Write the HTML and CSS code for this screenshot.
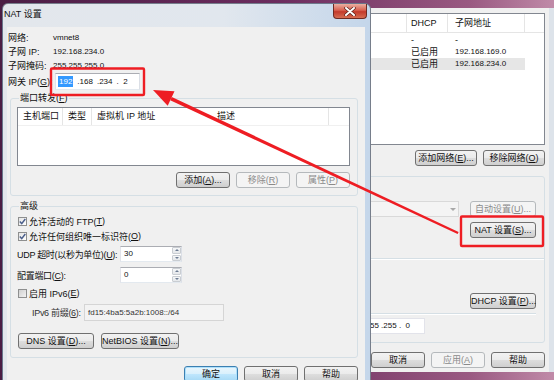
FILE: index.html
```html
<!DOCTYPE html>
<html lang="zh-CN">
<head>
    <meta charset="UTF-8">
    <meta name="viewport" content="width=device-width, initial-scale=1.0">
    <title>NAT 设置</title>
    <link rel="stylesheet" href="styles.css">
</head>
<body>

<div class="desktop">

    <!-- Virtual network editor, behind the dialog -->
    <div class="editor">
        <div class="netlist">
            <div class="netgrid nethead">
                <div class="nc rest"></div>
                <div class="nc dhcp">DHCP</div>
                <div class="nc subnet">子网地址</div>
                <div class="nc fill"></div>
            </div>
            <div class="netrows">
                <div class="netgrid netrow">
                    <div class="nc rest"></div>
                    <div class="nc dhcp">-</div>
                    <div class="nc subnet">-</div>
                    <div class="nc fill"></div>
                </div>
                <div class="netgrid netrow">
                    <div class="nc rest"></div>
                    <div class="nc dhcp">已启用</div>
                    <div class="nc subnet num">192.168.169.0</div>
                    <div class="nc fill"></div>
                </div>
                <div class="netgrid netrow selected">
                    <div class="nc rest"></div>
                    <div class="nc dhcp">已启用</div>
                    <div class="nc subnet num">192.168.234.0</div>
                    <div class="nc fill"></div>
                </div>
            </div>
        </div>

        <div class="btnrow top-gap">
            <button class="btn w62">添加网络(<u>E</u>)...</button>
            <button class="btn w62">移除网络(<u>O</u>)</button>
        </div>

        <div class="vmgroup">
            <div class="combo-row">
                <div class="combo"><span class="combo-arrow"></span></div>
                <button class="btn w66" disabled>自动设置(<u>U</u>)...</button>
            </div>
            <button class="btn w66 nat-btn">NAT 设置(<u>S</u>)...</button>
            <div class="hsep wide"></div>
            <button class="btn w66 dhcp-btn">DHCP 设置(<u>P</u>)...</button>
            <div class="hsep short"></div>
            <div class="maskbox num">255 .255 .255 .&nbsp; 0</div>
        </div>

        <div class="btnrow bottom-gap">
            <button class="btn">取消</button>
            <button class="btn" disabled>应用(<u>A</u>)</button>
            <button class="btn">帮助</button>
        </div>
    </div>

    <!-- NAT settings dialog -->
    <div class="dialog">
        <div class="titlebar">
            <span class="title">NAT 设置</span>
            <span class="close">
                <svg width="12" height="9" viewBox="0 0 12 9">
                    <path d="M2 1 L10 8 M10 1 L2 8" stroke="#5a2018" stroke-width="3.4" stroke-linecap="round"/>
                    <path d="M2 1 L10 8 M10 1 L2 8" stroke="#ffffff" stroke-width="2" stroke-linecap="round"/>
                </svg>
            </span>
        </div>

        <div class="client">
            <div class="info"><span class="lbl">网络:</span><span class="num">vmnet8</span></div>
            <div class="info"><span class="lbl">子网 IP:</span><span class="num">192.168.234.0</span></div>
            <div class="info"><span class="lbl">子网掩码:</span><span class="num">255.255.255.0</span></div>
            <div class="info gateway">
                <span class="lbl">网关 IP(<u>G</u>):</span>
                <div class="ipctl num"><span class="sel">192</span><span class="oct">.168</span><span class="oct">.234</span><span class="oct">.&nbsp; 2</span></div>
            </div>

            <fieldset class="group ports">
                <legend>端口转发(<u>F</u>)</legend>
                <div class="portlist">
                    <div class="porthead">
                        <div class="ph c1">主机端口</div>
                        <div class="ph c2">类型</div>
                        <div class="ph c3">虚拟机 IP 地址</div>
                        <div class="ph c4">描述</div>
                    </div>
                </div>
                <div class="btnrow port-btns">
                    <button class="btn">添加(<u>A</u>)...</button>
                    <button class="btn" disabled>移除(<u>R</u>)</button>
                    <button class="btn" disabled>属性(<u>P</u>)</button>
                </div>
            </fieldset>

            <fieldset class="group advanced">
                <legend>高级</legend>
                <label class="chk first">
                    <span class="box">
                        <svg width="7" height="7" viewBox="0 0 7 7"><path d="M0.8 3.6 L2.7 5.6 L6.3 1" fill="none" stroke="#4b5f8c" stroke-width="1.5"/></svg>
                    </span>
                    允许活动的 FTP(<u>T</u>)
                </label>
                <label class="chk">
                    <span class="box">
                        <svg width="7" height="7" viewBox="0 0 7 7"><path d="M0.8 3.6 L2.7 5.6 L6.3 1" fill="none" stroke="#4b5f8c" stroke-width="1.5"/></svg>
                    </span>
                    允许任何组织唯一标识符(<u>O</u>)
                </label>

                <div class="field udp">
                    <span class="flbl">UDP 超时(以秒为单位)(<u>U</u>):</span>
                    <div class="spin">
                        <span class="spin-val num">30</span>
                        <span class="spin-btns"><span class="sb up"></span><span class="sb down"></span></span>
                    </div>
                </div>
                <div class="field cfg">
                    <span class="flbl">配置端口(<u>C</u>):</span>
                    <div class="spin">
                        <span class="spin-val num">0</span>
                        <span class="spin-btns"><span class="sb up"></span><span class="sb down"></span></span>
                    </div>
                </div>

                <label class="chk ipv6">
                    <span class="box off"></span>
                    启用 IPv6(<u>E</u>)
                </label>

                <div class="field prefix">
                    <span class="plbl">IPv6 前缀(<u>6</u>):</span>
                    <div class="prefix-box num">fd15:4ba5:5a2b:1008::/64</div>
                </div>

                <div class="btnrow left dns-row">
                    <button class="btn w76">DNS 设置(<u>D</u>)...</button>
                    <button class="btn w78">NetBIOS 设置(<u>N</u>)...</button>
                </div>
            </fieldset>

            <div class="btnrow dlg-btns">
                <button class="btn default">确定</button>
                <button class="btn">取消</button>
                <button class="btn">帮助</button>
            </div>
        </div>
    </div>

    <!-- red annotation marks -->
    <svg class="marks" width="554" height="380" viewBox="0 0 554 380">
        <rect x="51" y="68.5" width="93" height="26.5" rx="1" fill="none" stroke="#ee1d23" stroke-width="2.4"/>
        <rect x="461" y="216.5" width="82" height="29.5" rx="1" fill="none" stroke="#ee1d23" stroke-width="2.4"/>
        <polygon points="458.6,232.1 457.6,234.1 170.2,100.3 171.8,96.9" fill="#ee1d23"/>
        <polygon points="153,90 174.5,91.3 167.7,105.7" fill="#ee1d23"/>
    </svg>

</div>

</body>
</html>
```

FILE: styles.css
```css
* {
    box-sizing: border-box;
}
body {
    margin: 0;
    width: 554px;
    height: 380px;
    overflow: hidden;
    font-family: "Liberation Sans", "Noto Sans CJK SC", sans-serif;
    font-size: 9px;
    color: #111;
    background: linear-gradient(90deg, #4a1d44 0%, #6b2c5e 50%, #9a5a82 85%, #c08aa8 100%);
}
.desktop {
    position: relative;
    width: 554px;
    height: 380px;
}
.num {
    font-size: 8px;
}
u {
    text-decoration: underline;
}

/* buttons */
.btn {
    font: inherit;
    color: #111;
    width: 54px;
    height: 16px;
    padding: 0;
    line-height: 14px;
    border: 1px solid #707070;
    border-radius: 3px;
    background: linear-gradient(#f2f2f2 0%, #ebebeb 48%, #dddddd 52%, #cfcfcf 100%);
    white-space: nowrap;
}
.btn:disabled {
    color: #8a8a8a;
    border-color: #b5b9bc;
    background: #f4f4f4;
}
.btn.default {
    border-color: #3c7fb1;
    background: linear-gradient(#eaf6fd 0%, #d9f0fc 48%, #bee6fd 52%, #a7d9f5 100%);
    box-shadow: inset 0 0 0 1px #aee0fb;
}
.w62 { width: 62px; }
.w66 { width: 66px; }
.w76 { width: 76px; }
.w78 { width: 78px; }
.btnrow {
    display: flex;
    justify-content: flex-end;
    gap: 6px;
}
.btnrow.left {
    justify-content: flex-start;
    gap: 7px;
}

/* ---------- background window ---------- */
.editor {
    position: absolute;
    left: 250px;
    top: 8px;
    width: 304px;
    height: 364px;
    background: #f0f0f0;
    border-right: 5px solid #dde3ea;
    padding: 5px 4px 0 10px;
    display: flex;
    flex-direction: column;
}
.netlist {
    height: 132px;
    border: 1px solid #828790;
    background: #fff;
}
.netgrid {
    display: grid;
    grid-template-columns: 1fr 41px 77px 19px;
}
.nethead {
    height: 19px;
    border-bottom: 1px solid #e5e5e5;
    line-height: 18px;
}
.nethead .nc {
    border-right: 1px solid #e5e5e5;
}
.nethead .fill {
    border-right: none;
}
.netrows {
    padding-top: 1px;
}
.netrow {
    height: 12px;
    line-height: 12px;
}
.nc.dhcp {
    padding-left: 4px;
}
.nc.subnet {
    padding-left: 7px;
}
.netrow.selected .nc {
    background: #e6e6e6;
}
.netrow.selected .fill {
    background: none;
}
.top-gap {
    margin-top: 5px;
}
.vmgroup {
    margin-top: 10px;
    height: 167px;
    border: 1px solid #d5dfe5;
    border-radius: 3px;
    padding: 24px 8px 0 0;
    display: flex;
    flex-direction: column;
    align-items: flex-end;
}
.combo-row {
    display: flex;
    gap: 11px;
}
.combo {
    width: 120px;
    height: 16px;
    border: 1px solid #d9d9d9;
    background: #f4f4f4;
    position: relative;
}
.combo-arrow {
    position: absolute;
    right: 2px;
    top: 6px;
    border-left: 3px solid transparent;
    border-right: 3px solid transparent;
    border-top: 3px solid #a8a8a8;
}
.nat-btn {
    margin-top: 5px;
}
.hsep {
    align-self: stretch;
    height: 2px;
    border-top: 1px solid #d5dfe5;
    border-bottom: 1px solid #fff;
}
.hsep.wide {
    margin-top: 20px;
    margin-right: -8px;
}
.dhcp-btn {
    margin-top: 33px;
}
.hsep.short {
    margin-top: 4px;
}
.maskbox {
    margin-top: 3px;
    margin-right: 111px;
    width: 120px;
    height: 16px;
    border: 1px solid #e2e3ea;
    background: #fff;
    line-height: 14px;
    text-align: right;
    padding-right: 14px;
}
.bottom-gap {
    margin-top: 9px;
}

/* ---------- NAT dialog ---------- */
.dialog {
    position: absolute;
    left: 2px;
    top: 3px;
    width: 369px;
    height: 392px;
    border: 1px solid rgba(30, 40, 60, 0.55);
    border-radius: 6px 6px 0 0;
    background: linear-gradient(90deg, #e3e7ec 0%, #e1e7ee 60%, #c4d6ea 100%);
    display: flex;
    flex-direction: column;
}
.titlebar {
    height: 23px;
    display: flex;
    align-items: flex-start;
}
.title {
    padding: 4px 0 0 1px;
    line-height: 12px;
    color: #111;
}
.close {
    margin-left: auto;
    margin-right: 3px;
    width: 34px;
    height: 15px;
    border: 1px solid #6e2a22;
    border-top: none;
    border-radius: 0 0 4px 4px;
    background: linear-gradient(#eab0a2 0%, #d8604f 45%, #c33a2b 55%, #d66d52 100%);
    display: flex;
    align-items: center;
    justify-content: center;
}
.client {
    flex: 1;
    margin: 0 5px 0 4px;
    background: #f0f0f0;
    padding: 3px 7px 0 1px;
    white-space: nowrap;
}
.info {
    display: flex;
    align-items: center;
    height: 14px;
}
.lbl {
    width: 45px;
}
.info.gateway {
    margin-top: 1px;
    height: 17px;
}
.ipctl {
    margin-left: 2px;
    width: 85px;
    height: 17px;
    border: 1px solid;
    border-color: #abadb3 #dbdfe6 #e3e9ef #e2e3ea;
    background: #fff;
    padding-left: 2px;
    display: flex;
    align-items: center;
}
.sel {
    background: #3399ff;
    color: #fff;
    padding: 0 1px;
    line-height: 11px;
}
.oct {
    margin-left: 4px;
}

.group {
    margin: 3px 0 0 2px;
    border: 1px solid #d5dfe5;
    border-radius: 3px;
    padding: 0 7px 7px 6px;
    min-width: 0;
}
.group legend {
    margin-left: 2px;
    padding: 0 1px;
    line-height: 11px;
}
.portlist {
    margin-top: 3px;
    height: 59px;
    border: 1px solid #828790;
    background: #fff;
}
.porthead {
    display: flex;
    height: 18px;
    line-height: 17px;
    border-bottom: 1px solid #f0f0f0;
}
.ph {
    padding-left: 5px;
}
.ph.c1 { width: 45px; border-right: 1px solid #e5e5e5; }
.ph.c2 { width: 29px; border-right: 1px solid #e5e5e5; }
.ph.c3 { width: 120px; }
.ph.c4 { width: 117px; border-right: 1px solid #e5e5e5; }
.port-btns {
    margin-top: 6px;
}

.group.advanced {
    margin-top: 5px;
    padding: 0 7px 8px 6px;
}
.chk {
    display: flex;
    align-items: center;
    height: 12px;
    margin-top: 3px;
    margin-left: 1px;
}
.chk.ipv6 {
    margin-top: 4px;
}
.box {
    width: 9px;
    height: 9px;
    margin-right: 2px;
    border: 1px solid #8e8f8f;
    background: linear-gradient(135deg, #e4e4e4, #ffffff);
    display: flex;
    align-items: center;
    justify-content: center;
}
.box.off {
    background: linear-gradient(135deg, #cfcfcf, #f2f2f2);
}
.field {
    display: flex;
    align-items: center;
    height: 16px;
}
.field.udp {
    margin-top: 4px;
}
.field.cfg {
    margin-top: 5px;
}
.flbl {
    width: 103px;
    flex-shrink: 0;
    letter-spacing: -0.3px;
}
.spin {
    flex-shrink: 0;
    width: 62px;
    height: 16px;
    border: 1px solid;
    border-color: #abadb3 #dbdfe6 #e3e9ef #e2e3ea;
    background: #fff;
    display: flex;
}
.spin-val {
    flex: 1;
    padding-left: 3px;
    line-height: 13px;
}
.spin-btns {
    width: 10px;
    display: flex;
    flex-direction: column;
    gap: 1px;
    padding: 0 0 0 1px;
}
.sb {
    flex: 1;
    border: 1px solid #c9cdd2;
    border-radius: 1px;
    background: linear-gradient(#f6f7f8, #e4e7ea);
    display: flex;
    align-items: center;
    justify-content: center;
}
.sb::after {
    content: "";
    border-left: 2px solid transparent;
    border-right: 2px solid transparent;
}
.sb.up::after {
    border-bottom: 2px solid #6d7c93;
}
.sb.down::after {
    border-top: 2px solid #6d7c93;
}
.field.prefix {
    margin-top: 5px;
    height: 17px;
    padding-left: 15px;
}
.plbl {
    width: 52px;
    flex-shrink: 0;
    color: #333;
    letter-spacing: -0.3px;
}
.prefix-box {
    width: 140px;
    height: 17px;
    border: 1px solid #d5d5d5;
    background: #f3f3f3;
    padding-left: 3px;
    line-height: 15px;
    color: #333;
}
.dns-row {
    margin-top: 12px;
    padding-left: 1px;
}
.dlg-btns {
    margin-top: 8px;
}

/* annotation overlay */
.marks {
    position: absolute;
    left: 0;
    top: 0;
    pointer-events: none;
}
```
